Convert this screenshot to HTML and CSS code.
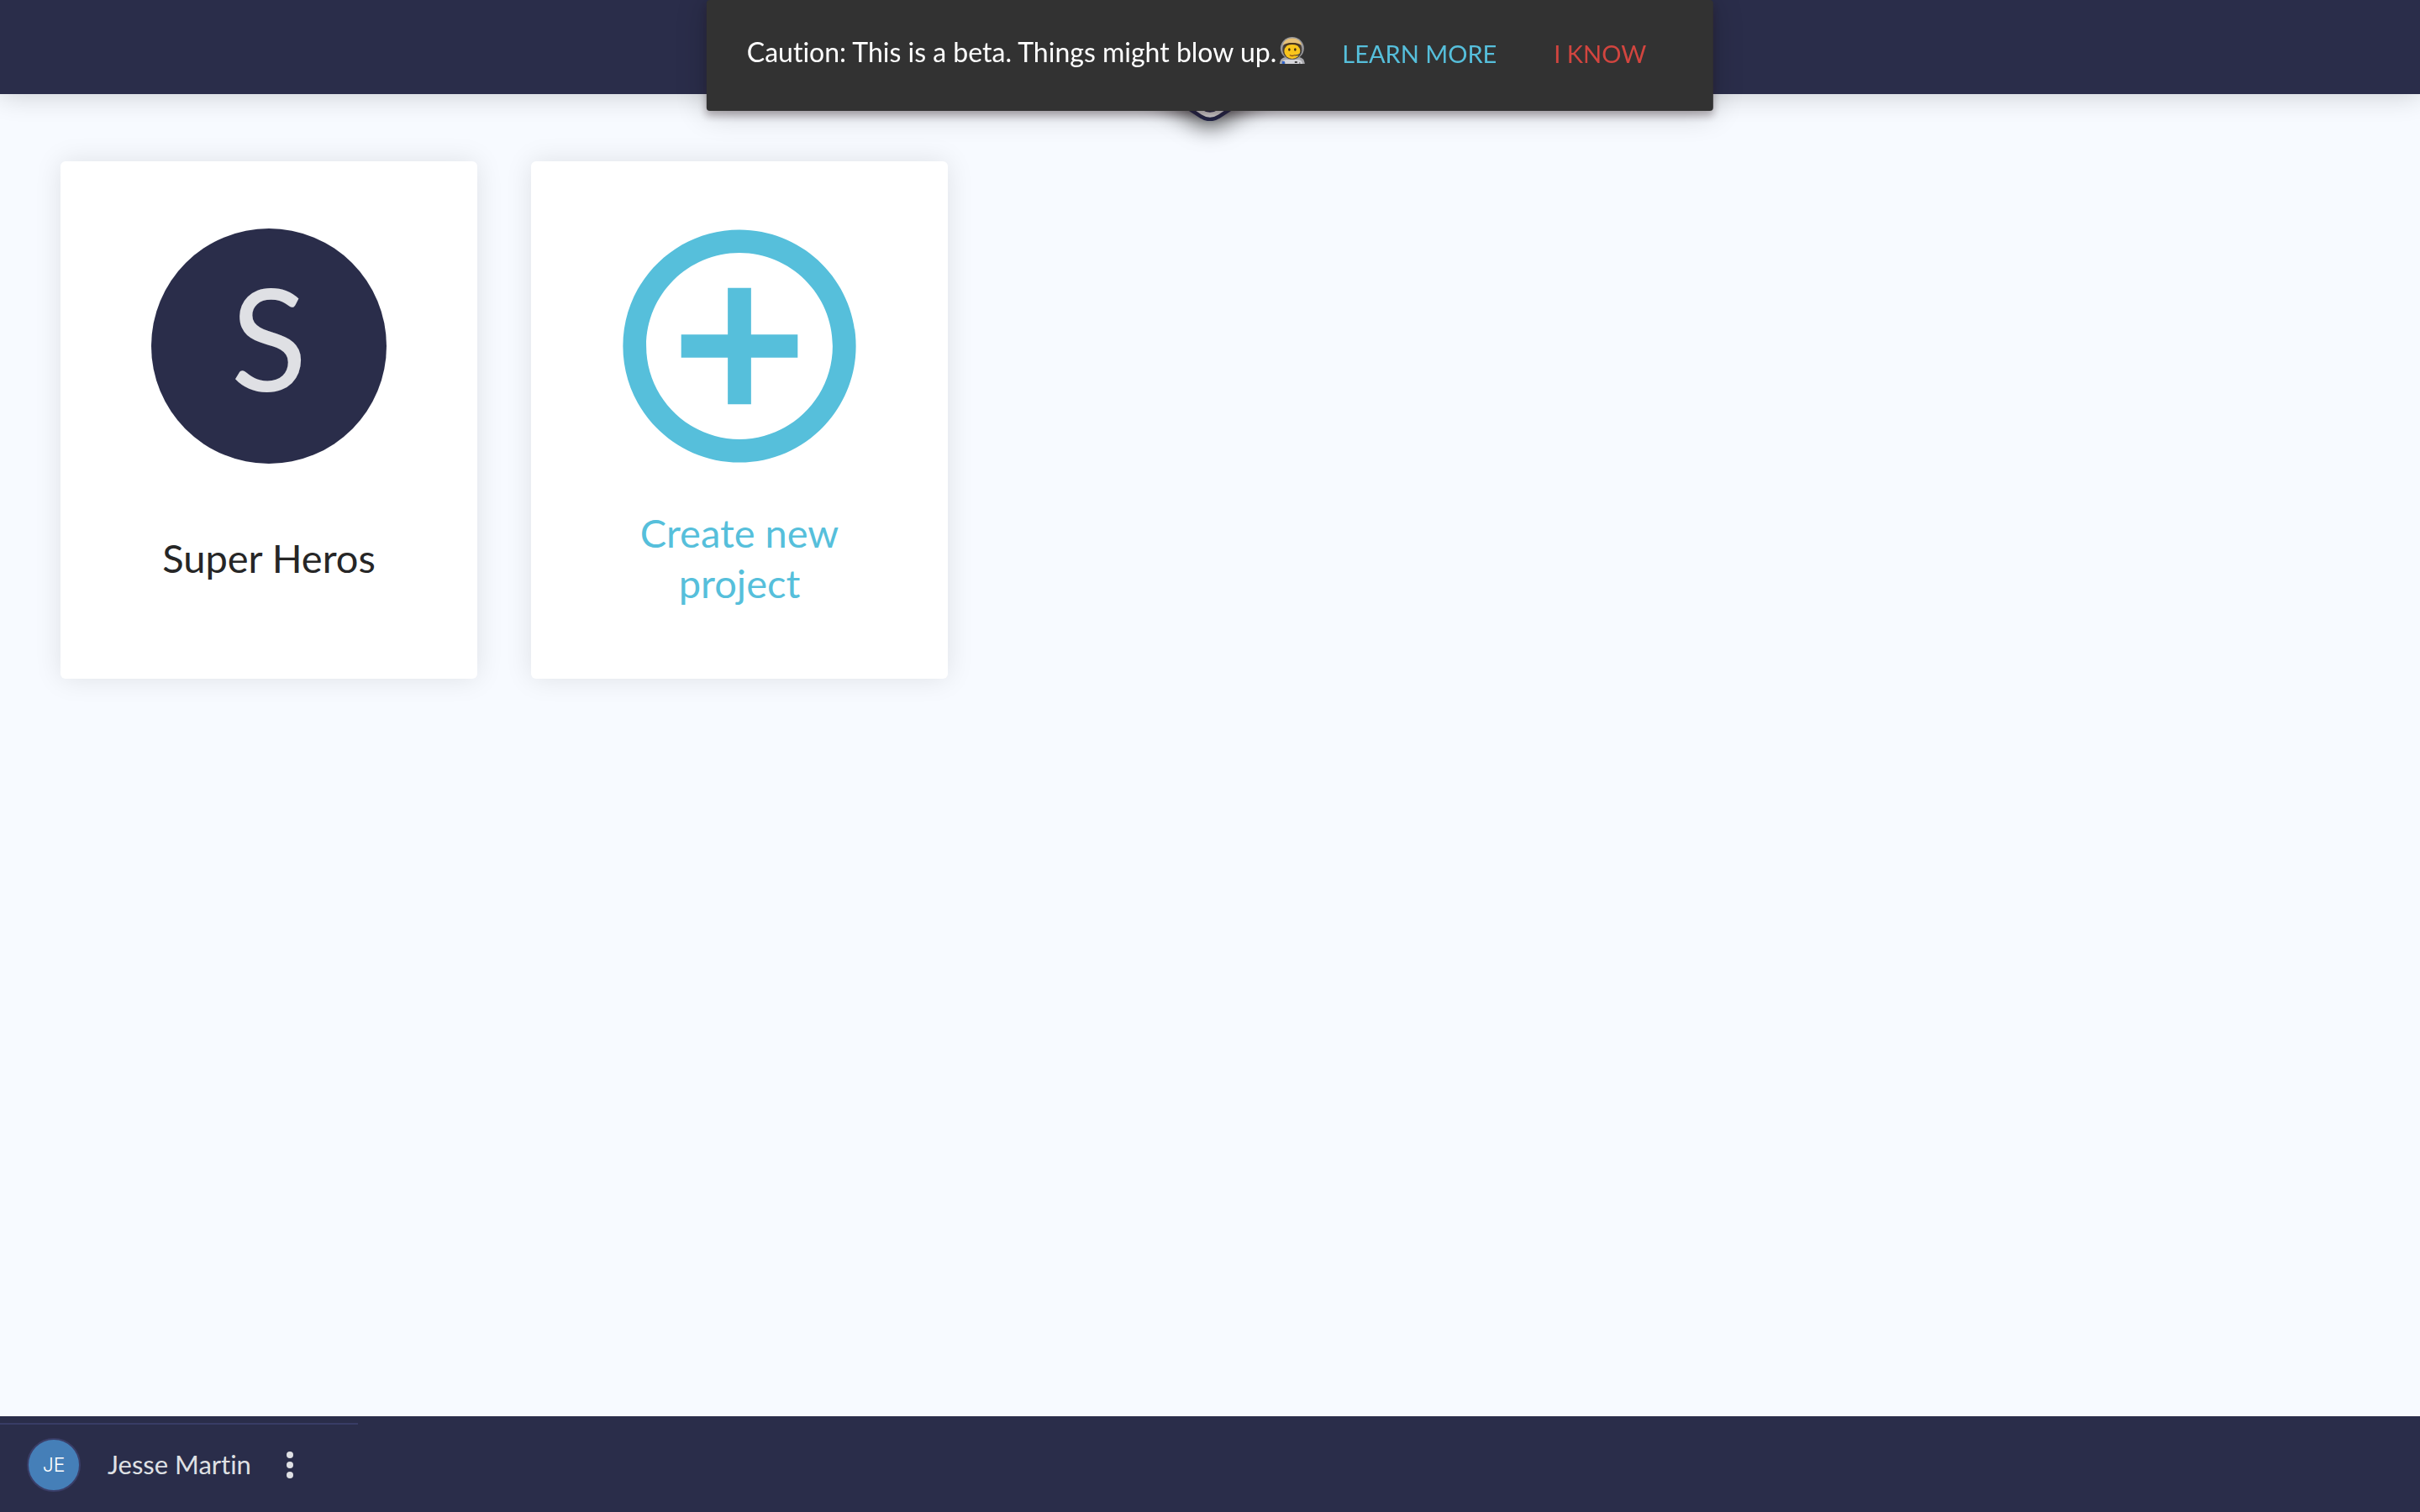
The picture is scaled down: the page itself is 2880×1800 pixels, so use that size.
FILE: index.html
```html
<!DOCTYPE html>
<html lang="en">
<head>
<meta charset="utf-8">
<title>Projects</title>
<meta name="viewport" content="width=device-width, initial-scale=1">
<link rel="stylesheet" href="styles.css">
</head>
<body>
<header class="topbar">
  <svg class="logo" viewBox="0 0 128 144" aria-hidden="true">
    <path class="logo-dark" d="M52 7.500Q64 0 76 7.500L120 36Q126 40 126 46V98Q126 106 120 112L76 140.500Q64 148 52 140.500L8 112Q2 106 2 98V46Q2 40 8 36z"/>
    <path class="logo-light" d="M54 11.500Q64 5 74 11.500L115 38Q121 42 121 48V96Q121 103 115 109L74 136.500Q64 143 54 136.500L13 109Q7 103 7 96V48Q7 42 13 38z"/>
    <path class="logo-dark" d="M54 17.500Q64 11 74 17.500L109 41Q115 45 115 50V94Q115 100 109 105L74 130.500Q64 137 54 130.500L19 105Q13 100 13 94V50Q13 45 19 41z"/>
  </svg>
</header>

<div class="snackbar" role="alert">
  <p class="snackbar-text">Caution: This is a beta. Things might blow up.</p>
  <svg class="astronaut" viewBox="0 0 30 32" role="img" aria-label="Astronaut">
    <path d="M0 36v-5q1-6 7-7h16q6 1 7 7v5z" fill="#a8a8ac"/>
    <path d="M3 36v-5q1-4 5-4h14q4 0 5 4v5z" fill="#d5d5da"/>
    <path d="M6 32v-2M24 32v-2" stroke="#777" fill="none"/>
    <ellipse cx="15" cy="13.500" rx="14" ry="13.500" fill="#97979b"/>
    <ellipse cx="15" cy="15" rx="11.500" ry="11.500" fill="#4a4036"/>
    <ellipse cx="15" cy="17" rx="9.500" ry="9" fill="#f9c51c"/>
    <path d="M3.500 10q2-8.500 11.500-8.500t11.500 8.500q-4-3-11.500-3t-11.500 3z" fill="#e5c078"/>
    <path d="M5 12q2-5 10-5t10 5q-4-3-10-3t-10 3z" fill="#4a351d"/>
    <ellipse cx="11.500" cy="15" rx="1.300" ry="1.700" fill="#3f2a12"/>
    <ellipse cx="18.500" cy="15" rx="1.300" ry="1.700" fill="#3f2a12"/>
    <path d="M12 21.500q3 2 6 0" stroke="#8a4b16" stroke-width="1.500" fill="none"/>
    <path d="M26 16q0 6-8 6" stroke="#444" stroke-width="1.200" fill="none"/>
    <rect x="3" y="29" width="3" height="3" fill="#2d62cc"/>
    <rect x="18" y="29" width="3" height="2" fill="#444"/>
  </svg>
  <button class="snackbar-action learn" type="button">LEARN MORE</button>
  <button class="snackbar-action dismiss" type="button">I KNOW</button>
</div>

<main class="projects">
  <a class="card" href="#super-heros">
    <span class="badge">S</span>
    <span class="card-title">Super Heros</span>
  </a>
  <a class="card create" href="#new">
    <svg class="plus" viewBox="1.900 1.900 20.200 20.200" aria-hidden="true">
      <path d="M13 7h-2v4H7v2h4v4h2v-4h4v-2h-4V7zm-1-5C6.480 2 2 6.480 2 12s4.480 10 10 10 10-4.480 10-10S17.520 2 12 2zm0 18c-4.410 0-8-3.590-8-8s3.590-8 8-8 8 3.590 8 8-3.590 8-8 8z"/>
    </svg>
    <span class="card-title">Create new project</span>
  </a>
</main>

<footer class="bottombar">
  <div class="user">
    <span class="avatar">JE</span>
    <span class="user-name">Jesse Martin</span>
    <button class="menu" type="button" aria-label="User menu">
      <svg class="dots" viewBox="0 0 8 32" aria-hidden="true">
        <circle cx="4" cy="4" r="4"/><circle cx="4" cy="16" r="4"/><circle cx="4" cy="28" r="4"/>
      </svg>
    </button>
  </div>
</footer>
</body>
</html>
```
FILE: styles.css
```css
* { box-sizing: border-box; }

body {
  margin: 0;
  min-height: 100vh;
  display: flex;
  flex-direction: column;
  background: #f7faff;
  color: #262626;
  font-family: Lato, sans-serif;
  font-size: 32px;
  font-variant-ligatures: none;
}

button {
  border: 0;
  background: none;
  font: inherit;
  cursor: pointer;
}

.topbar {
  height: 112px;
  display: flex;
  justify-content: center;
  align-items: flex-start;
  background: #2a2d4a;
  box-shadow: 0 0 32px rgba(0, 0, 0, 0.2);
}

.logo {
  width: 128px;
  height: 144px;
  flex: none;
  filter: drop-shadow(0 6px 14px rgba(0, 0, 0, 0.7));
}
.logo-dark { fill: #23264a; }
.logo-light { fill: #e0e0e0; }

.snackbar {
  position: fixed;
  top: 0;
  left: 50%;
  transform: translateX(-50%);
  display: flex;
  align-items: center;
  padding: 40px 48px 48px;
  border-radius: 4px;
  background: #323232;
  color: #fff;
  line-height: 40px;
  white-space: nowrap;
  box-shadow: 0 6px 10px rgba(40, 20, 30, 0.3), 0 2px 36px rgba(0, 0, 0, 0.2);
}
.snackbar-text { margin: 0 4px 0 0; }
.astronaut { width: 30px; height: 32px; margin-bottom: 4px; }
.snackbar-action { padding: 4px 32px 0; font-size: 29px; }
.learn { margin-left: 12px; color: #56bfdb; }
.dismiss { margin-left: 4px; color: #d2453f; }

.projects {
  flex: 1;
  display: flex;
  flex-wrap: wrap;
  align-content: flex-start;
  gap: 64px;
  padding: 80px 72px;
}

.card {
  width: 496px;
  min-height: 616px;
  display: flex;
  flex-direction: column;
  align-items: center;
  padding: 80px 96px 72px;
  border-radius: 6px;
  background: #fff;
  color: inherit;
  text-align: center;
  text-decoration: none;
  box-shadow: 0 0 32px rgba(0, 0, 0, 0.1);
}
.create { color: #56bfdb; }

.badge {
  width: 280px;
  height: 280px;
  display: flex;
  align-items: center;
  justify-content: center;
  padding-bottom: 22px;
  border-radius: 50%;
  background: #2a2d4a;
  color: #dfe0e4;
  font-size: 168px;
  line-height: 200px;
}
.plus { width: 280px; height: 280px; fill: currentColor; }

.card-title {
  flex: 1;
  display: flex;
  align-items: center;
  margin-top: 40px;
  font-size: 47px;
  line-height: 60px;
}

.bottombar {
  height: 114px;
  padding-top: 8px;
  background: #2a2d4a;
}
.user {
  width: 426px;
  height: 106px;
  display: flex;
  align-items: center;
  padding: 0 32px 8px;
  border-top: 2px solid #383c66;
  color: #dfe0e4;
}
.avatar {
  width: 64px;
  height: 64px;
  display: flex;
  align-items: center;
  justify-content: center;
  border: 2px solid #3a3e68;
  border-radius: 50%;
  background: #457fb8;
  color: #fff;
  font-family: Inter, sans-serif;
  font-size: 23px;
  font-weight: 300;
}
.user-name {
  margin: 0 26px 0 32px;
  padding-bottom: 2px;
  font-size: 31px;
  line-height: 40px;
}
.menu { display: flex; padding: 0 16px; color: inherit; }
.dots { width: 8px; height: 32px; fill: currentColor; }
```
